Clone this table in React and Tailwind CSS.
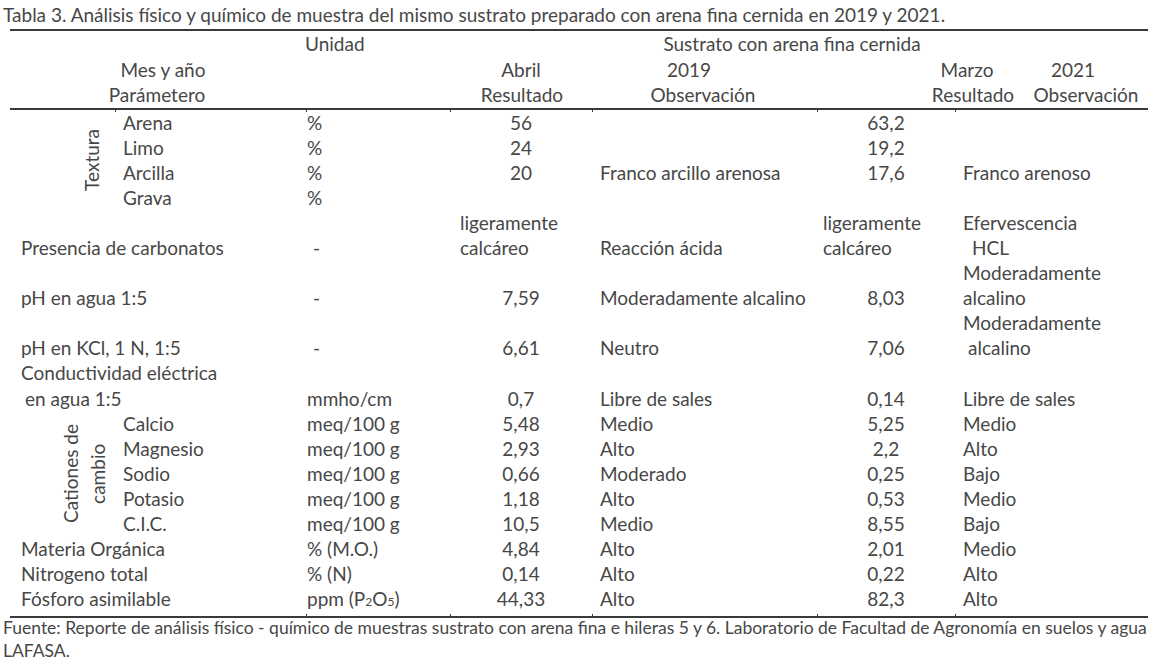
const textura = [
  ["Arena", "%", "56", "", "63,2", ""],
  ["Limo", "%", "24", "", "19,2", ""],
  ["Arcilla", "%", "20", "Franco arcillo arenosa", "17,6", "Franco arenoso"],
  ["Grava", "%", "", "", "", ""],
];

const cationes = [
  ["Calcio", "meq/100 g", "5,48", "Medio", "5,25", "Medio"],
  ["Magnesio", "meq/100 g", "2,93", "Alto", "2,2", "Alto"],
  ["Sodio", "meq/100 g", "0,66", "Moderado", "0,25", "Bajo"],
  ["Potasio", "meq/100 g", "1,18", "Alto", "0,53", "Medio"],
  ["C.I.C.", "meq/100 g", "10,5", "Medio", "8,55", "Bajo"],
];

const otros = [
  ["Materia Orgánica", "% (M.O.)", "4,84", "Alto", "2,01", "Medio"],
  ["Nitrogeno total", "% (N)", "0,14", "Alto", "0,22", "Alto"],
  [
    "Fósforo asimilable",
    <>ppm (P<span className="text-[12px]">2</span>O<span className="text-[12px]">5</span>)</>,
    "44,33",
    "Alto",
    "82,3",
    "Alto",
  ],
];

const cols = "grid grid-cols-[105px_191px_144px_142px_225px_138px_193px]";

function SimpleRow({ row }) {
  const [name, unit, a, obsA, b, obsB] = row;
  return (
    <>
      <div className="pl-[8px] whitespace-nowrap">{name}</div>
      <div className="pl-[1px] whitespace-nowrap">{unit}</div>
      <div className="text-center">{a}</div>
      <div className="pl-[8px] whitespace-nowrap">{obsA}</div>
      <div className="text-center">{b}</div>
      <div className="pl-[8px] whitespace-nowrap">{obsB}</div>
    </>
  );
}

function OtherRow({ row }) {
  const [name, unit, a, obsA, b, obsB] = row;
  return (
    <>
      <div className="col-span-2 pl-[11px] whitespace-nowrap">{name}</div>
      <div className="pl-[1px] whitespace-nowrap">{unit}</div>
      <div className="text-center">{a}</div>
      <div className="pl-[8px]">{obsA}</div>
      <div className="text-center">{b}</div>
      <div className="pl-[8px]">{obsB}</div>
    </>
  );
}

function Rule({ ticks, above }) {
  // thin rule with the little cell marks Word leaves on the borders
  return (
    <div className={cols}>
      {ticks.map((t, i) => (
        <div key={i} className={"flex " + (above ? "flex-col-reverse" : "flex-col")}>
          <div className="h-[2px] bg-[#3a3a3a]"></div>
          <div className={"h-[2px] w-px " + (t ? "bg-[#3a3a3a]" : "bg-transparent")}></div>
        </div>
      ))}
    </div>
  );
}

export default function App() {
  return (
    <div className="w-[1156px] h-[661px] bg-white text-[#474747] font-['Lato',sans-serif] text-[19px]">
      <div className="pl-[3px] leading-[29px] whitespace-nowrap">
        Tabla 3. Análisis físico y químico de muestra del mismo sustrato preparado con arena fina cernida en 2019 y 2021.
      </div>

      <div className="ml-[10px] w-[1138px] h-[2px] bg-[#3a3a3a]"></div>

      <div className="leading-[25.5px] whitespace-nowrap">
        <div className="flex">
          <span className="ml-[305px] w-[100px] shrink-0">Unidad</span>
          <span className="ml-[237px] w-[300px] shrink-0 text-center">Sustrato con arena fina cernida</span>
        </div>
        <div className="flex">
          <span className="ml-[103px] w-[120px] shrink-0 text-center">Mes y año</span>
          <span className="ml-[248px] w-[100px] shrink-0 text-center">Abril</span>
          <span className="ml-[78px] w-[80px] shrink-0 text-center">2019</span>
          <span className="ml-[198px] w-[80px] shrink-0 text-center">Marzo</span>
          <span className="ml-[26px] w-[80px] shrink-0 text-center">2021</span>
        </div>
        <div className="flex">
          <span className="ml-[97px] w-[120px] shrink-0 text-center">Parámetero</span>
          <span className="ml-[245px] w-[120px] shrink-0 text-center">Resultado</span>
          <span className="ml-[56px] w-[130px] shrink-0 text-center">Observación</span>
          <span className="ml-[155px] w-[100px] shrink-0 text-center">Resultado</span>
          <span className="ml-[3px] w-[120px] shrink-0 text-center">Observación</span>
        </div>
      </div>

      <div className="ml-[10px] w-[1138px]">
        <Rule ticks={[false, true, true, true, true, true, true]} />

        <div className={cols + " leading-[25.1px] -mt-[2px]"}>
          <div className="row-span-4 flex items-center justify-end pr-[11px]">
            <span className="[writing-mode:vertical-rl] rotate-180">Textura</span>
          </div>
          {textura.map((r) => (
            <SimpleRow key={r[0]} row={r} />
          ))}

          <div className="col-span-2 self-end pl-[11px]">Presencia de carbonatos</div>
          <div className="self-end pl-[7px]">-</div>
          <div className="pl-[10px]">ligeramente<br />calcáreo</div>
          <div className="self-end pl-[8px]">Reacción ácida</div>
          <div className="pl-[6px]">ligeramente<br />calcáreo</div>
          <div className="pl-[8px]">Efervescencia<br /><span className="pl-[9px]">HCL</span></div>

          <div className="col-span-2 self-end pl-[11px]">pH en agua 1:5</div>
          <div className="self-end pl-[7px]">-</div>
          <div className="self-end text-center">7,59</div>
          <div className="self-end pl-[8px] whitespace-nowrap">Moderadamente alcalino</div>
          <div className="self-end text-center">8,03</div>
          <div className="pl-[8px]">Moderadamente<br />alcalino</div>

          <div className="col-span-2 self-end pl-[11px]">pH en KCl, 1 N, 1:5</div>
          <div className="self-end pl-[7px]">-</div>
          <div className="self-end text-center">6,61</div>
          <div className="self-end pl-[8px]">Neutro</div>
          <div className="self-end text-center">7,06</div>
          <div className="pl-[8px]">Moderadamente<br /><span className="pl-[5px]">alcalino</span></div>

          <div className="col-span-2 pl-[11px] whitespace-nowrap">Conductividad eléctrica<br /><span className="pl-[4px]">en agua 1:5</span></div>
          <div className="self-end pl-[1px]">mmho/cm</div>
          <div className="self-end text-center">0,7</div>
          <div className="self-end pl-[8px]">Libre de sales</div>
          <div className="self-end text-center">0,14</div>
          <div className="self-end pl-[8px]">Libre de sales</div>

          <div className="row-span-5 flex items-center justify-end pr-[4px]">
            <span className="[writing-mode:vertical-rl] rotate-180 text-center leading-[27px]">
              Cationes de<br />cambio
            </span>
          </div>
          {cationes.map((r) => (
            <SimpleRow key={r[0]} row={r} />
          ))}

          {otros.map((r) => (
            <OtherRow key={r[0]} row={r} />
          ))}
        </div>

        <Rule ticks={[false, false, true, true, true, true, true]} above />
      </div>

      <div className="pl-[3px] -mt-[2px] leading-[23px] text-[17.5px] whitespace-nowrap">
        Fuente: Reporte de análisis físico - químico de muestras sustrato con arena fina e hileras 5 y 6. Laboratorio de Facultad de Agronomía en suelos y agua
        <br />
        LAFASA.
      </div>
    </div>
  );
}
